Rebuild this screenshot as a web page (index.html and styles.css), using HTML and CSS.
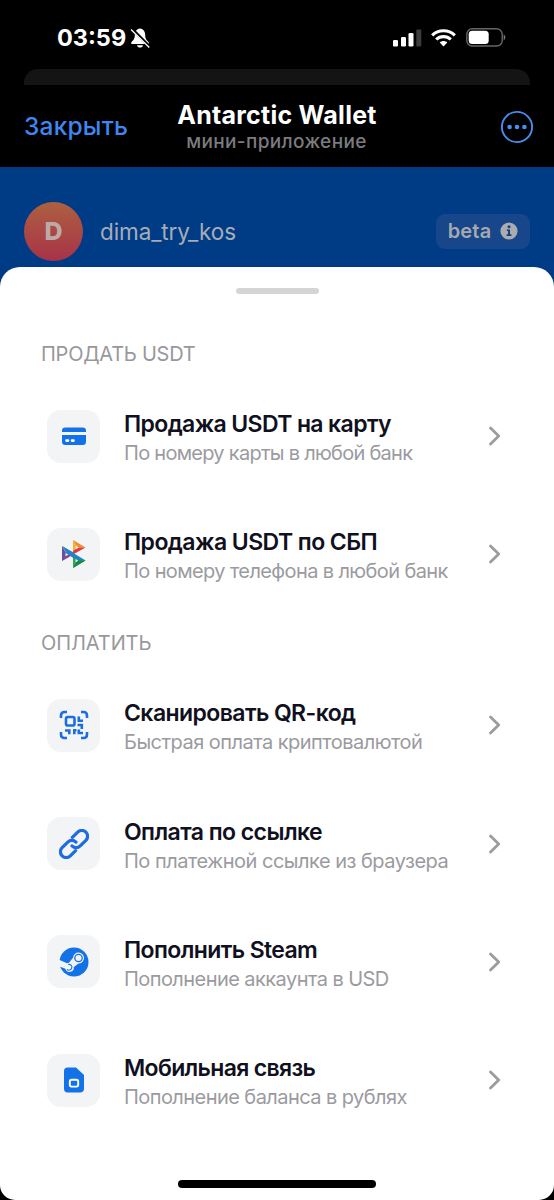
FILE: index.html
```html
<!DOCTYPE html>
<html lang="ru">
<head>
<meta charset="utf-8">
<title>Antarctic Wallet</title>
<link rel="stylesheet" href="styles.css">
</head>
<body>
<div class="phone">
  <div class="status">
    <div class="clock"><span class="time">03:59</span>
      <svg class="bell" width="20" height="21" viewBox="0 0 20 21"><path d="M10 0.5C6.3 1 4.8 3.8 4.8 7.2C4.8 11 3.2 12.2 1.3 14.2V16H18.7V14.2C16.8 12.2 15.2 11 15.2 7.2C15.2 3.8 13.7 1 10 .5ZM7 17.2H13C12.6 20.3 7.4 20.3 7 17.2Z" fill="#fff"/><path d="M2 1L20 19" stroke="#000" stroke-width="3"/><path d="M1 1.5L19.3 19.5" stroke="#fff" stroke-width="1.3"/></svg>
    </div>
    <div class="indicators">
      <svg width="29" height="18" viewBox="0 0 29 18"><g fill="#fff"><rect x="0" y="11" width="5" height="6.5" rx="1.3"/><rect x="8" y="8" width="5" height="9.5" rx="1.3"/><rect x="15.5" y="4" width="5" height="13.5" rx="1.3"/></g><rect x="23.3" y="0.5" width="5" height="17" rx="1.3" fill="#3d3d3d"/></svg>
      <svg class="wifi" width="25" height="18" viewBox="0 0 25 18"><g fill="none" stroke="#fff" stroke-width="3.1"><path d="M1.2 6.4C7.4 .2 17.6 .2 23.8 6.4"/><path d="M5.2 10.5C9.2 6.6 15.8 6.6 19.8 10.5"/></g><path d="M8.7 13.4C10.8 11.4 14.2 11.4 16.3 13.4L12.5 17.4Z" fill="#fff"/></svg>
      <svg class="battery" width="40" height="19" viewBox="0 0 40 19"><rect x=".8" y=".8" width="35.4" height="17.2" rx="5.5" fill="none" stroke="#666" stroke-width="1.4"/><rect x="2.7" y="2.8" width="20" height="13.2" rx="3.5" fill="#fff"/><path d="M37.7 6.2Q41 9.4 37.7 12.6Z" fill="#777"/></svg>
    </div>
  </div>
  <div class="strip"></div>
  <header class="header">
    <span class="close">Закрыть</span>
    <div class="heading"><span class="name">Antarctic Wallet</span><span class="kind">мини-приложение</span></div>
    <svg class="more" width="34" height="34" viewBox="0 0 34 34"><circle cx="17" cy="17" r="15.1" fill="none" stroke="#4a8df0" stroke-width="1.9"/><g fill="#4a8df0"><circle cx="9.6" cy="17" r="2.3"/><circle cx="17" cy="17" r="2.3"/><circle cx="24.4" cy="17" r="2.3"/></g></svg>
  </header>
  <div class="profile">
    <div class="avatar">D</div>
    <span class="user">dima_try_kos</span>
    <div class="beta"><span>beta</span><svg width="18" height="18" viewBox="0 0 18 18"><circle cx="9" cy="9" r="8.6" fill="#aaacaf"/><circle cx="9" cy="4.8" r="1.5" fill="#173f7f"/><path d="M6.8 7.5H10V12.3H11.4V13.9H6.6V12.3H8V9H6.8Z" fill="#173f7f"/></svg></div>
  </div>
  <div class="backdrop">
  <main class="sheet">
    <div class="grip"></div>
    <section class="group">
      <h2 class="label l-sell">ПРОДАТЬ USDT</h2>
      <div class="row">
        <div class="tile"><svg width="26" height="26" viewBox="0 0 26 26"><path d="M1 9V7.8Q1 4.5 4.3 4.5H21.7Q25 4.5 25 7.8V9Z" fill="#1472e8"/><path d="M1 12H25V18.7Q25 22 21.7 22H4.3Q1 22 1 18.7Z" fill="#1472e8"/><path d="M5.5 17.6H7M11 17.6H12.5" stroke="#fff" stroke-width="2.6" stroke-linecap="round"/></svg></div>
        <div class="copy"><span class="title t1">Продажа USDT на карту</span><span class="sub s1">По номеру карты в любой банк</span></div>
        <svg class="chevron" width="14" height="20" viewBox="0 0 14 20"><path d="M2.5 2L10.7 10L2.5 18"/></svg>
      </div>
      <div class="row">
        <div class="tile"><svg width="26" height="30" viewBox="0 0 26 30"><path d="M1 7L6.5 16.5V17L1 22Z" fill="#65509b"/><path d="M1 7L12 13.2V18.5Z" fill="#4376bc"/><path d="M1 22L7 18.8L12 15.5L6 12Z" fill="#824d9b"/><path d="M12 1L16.5 8.3V11L12 13.5Z" fill="#f3b52d"/><path d="M12 1L24.5 8.5L16.5 8.5Z" fill="#f28b29"/><path d="M24.5 8.5L12 15.6V12L17 8.5Z" fill="#df3846"/><path d="M12 16L24.5 21.5L12 29Z" fill="#36a650"/><path d="M1 7L24.5 21.5H16.5L6 15Z" fill="#2084c5"/><path d="M24.5 21.5L12 29L16.3 21.5Z" fill="#188745"/><path d="M4.5 14L7.3 15.6L4.5 17.3ZM14.8 6.7L17.8 8.5L14.8 10.2ZM14.6 20L17.2 21.7L14.6 23.3Z" fill="#f4f4f6"/></svg></div>
        <div class="copy"><span class="title t2">Продажа USDT по СБП</span><span class="sub s2">По номеру телефона в любой банк</span></div>
        <svg class="chevron" width="14" height="20" viewBox="0 0 14 20"><path d="M2.5 2L10.7 10L2.5 18"/></svg>
      </div>
    </section>
    <section class="group second">
      <h2 class="label l-pay">ОПЛАТИТЬ</h2>
      <div class="row">
        <div class="tile"><svg width="30" height="30" viewBox="0 0 30 30" fill="none" stroke="#1d6de0" stroke-width="2.6"><path d="M2 8V5.5Q2 2 5.5 2H8M22 2H24.5Q28 2 28 5.5V8M28 22V24.5Q28 28 24.5 28H22M8 28H5.5Q2 28 2 24.5V22"/><rect x="7" y="7" width="8.5" height="8.5" rx="1.8"/><path d="M19.8 6.5V10.8H24M18.5 15H22.8V19M6 20.5H10.3V24.2M15.3 24.2V20.2H17.5M19.8 19.5V23H24"/></svg></div>
        <div class="copy"><span class="title t3">Сканировать QR-код</span><span class="sub s3">Быстрая оплата криптовалютой</span></div>
        <svg class="chevron" width="14" height="20" viewBox="0 0 14 20"><path d="M2.5 2L10.7 10L2.5 18"/></svg>
      </div>
      <div class="row">
        <div class="tile"><svg width="30" height="30" viewBox="0 0 30 30"><g transform="rotate(-45 15 15)" fill="none" stroke="#1d6de0" stroke-width="3.2" stroke-linecap="round"><path d="M11.5 20.8H4A5.8 5.8 0 0 1 4 9.2H12A5.8 5.8 0 0 1 17.8 15"/><path d="M18.5 9.2H26A5.8 5.8 0 0 1 26 20.8H18A5.8 5.8 0 0 1 12.2 15"/></g></svg></div>
        <div class="copy"><span class="title t4">Оплата по ссылке</span><span class="sub s4">По платежной ссылке из браузера</span></div>
        <svg class="chevron" width="14" height="20" viewBox="0 0 14 20"><path d="M2.5 2L10.7 10L2.5 18"/></svg>
      </div>
      <div class="row">
        <div class="tile"><svg width="30" height="30" viewBox="0 0 30 30"><circle cx="15" cy="15" r="14.5" fill="#1472e8"/><path d="M0 12.8L8 16.2L10 15.8L14 10.8A5.5 5.5 0 1 1 19.5 16.6L14.8 20.1A4.3 4.3 0 0 1 6.4 21.8L0 19.2Z" fill="#f4f4f6"/><circle cx="19.5" cy="11" r="3.7" fill="none" stroke="#1472e8" stroke-width="1.3"/><path d="M9.2 17.5A2.9 2.9 0 1 1 8 22.4" fill="none" stroke="#1472e8" stroke-width="1.1"/></svg></div>
        <div class="copy"><span class="title t5">Пополнить Steam</span><span class="sub s5">Пополнение аккаунта в USD</span></div>
        <svg class="chevron" width="14" height="20" viewBox="0 0 14 20"><path d="M2.5 2L10.7 10L2.5 18"/></svg>
      </div>
      <div class="row">
        <div class="tile"><svg width="22" height="26" viewBox="0 0 22 26"><path d="M4.5 .5H13L21 8V21.5Q21 25.5 17 25.5H4.5Q1 25.5 1 21.5V4Q1 .5 4.5 .5Z" fill="#1472e8"/><rect x="6.8" y="12.8" width="8.4" height="6.8" rx="1.8" fill="none" stroke="#fff" stroke-width="1.9"/></svg></div>
        <div class="copy"><span class="title t6">Мобильная связь</span><span class="sub s6">Пополнение баланса в рублях</span></div>
        <svg class="chevron" width="14" height="20" viewBox="0 0 14 20"><path d="M2.5 2L10.7 10L2.5 18"/></svg>
      </div>
    </section>
    <div class="home"></div>
  </main>
  </div>
</div>
</body>
</html>
```

FILE: styles.css
```css
* { box-sizing: border-box; }
body { margin: 0; background: #000; font-family: Inter, "Liberation Sans", sans-serif; }
.phone { width: 554px; height: 1200px; overflow: hidden; display: flex; flex-direction: column; background: #003b85; white-space: nowrap; }
.status { height: 69px; flex: none; background: #000; color: #fff; display: flex; justify-content: space-between; padding: 28px 48px 0 57px; }
.clock { display: flex; gap: 4px; height: 20px; align-items: center; }
.time { font-size: 23.5px; font-weight: 700; line-height: 20px; }
.indicators { display: flex; height: 19px; align-items: center; }
.wifi { margin-left: 9px; }
.battery { margin-left: 10px; }
.strip { height: 16px; flex: none; background: #000; padding: 0 24px; }
.strip::before { content: ""; display: block; height: 16px; background: #141414; border-radius: 14px 14px 0 0; }
.header { height: 82px; flex: none; background: #000; display: grid; grid-template-columns: 150px 1fr 150px; align-items: center; padding: 1px 20px 0 24px; }
.close { color: #3f86f0; font-size: 24.5px; font-weight: 500; letter-spacing: .2px; line-height: 28px; padding-bottom: 2px; }
.heading { display: flex; flex-direction: column; align-items: center; padding-top: 1px; }
.name { color: #fff; font-size: 25px; font-weight: 700; line-height: 29px; letter-spacing: .25px; margin-left: -4px; }
.kind { color: #7b7b7f; font-size: 19px; font-weight: 500; line-height: 24px; letter-spacing: .35px; margin-left: -5px; }
.more { justify-self: end; }
.profile { height: 100px; flex: none; display: flex; align-items: center; padding: 28px 24px 0; color: #a6adb7; }
.avatar { width: 59px; height: 59px; border-radius: 50%; display: flex; align-items: center; justify-content: center; background: linear-gradient(#ad6040, #a83248); color: #bdaaa8; font-size: 25px; font-weight: 800; }
.user { margin-left: 17px; font-size: 22.5px; letter-spacing: -.1px; }
.beta { margin-left: auto; width: 94px; height: 35px; border-radius: 9px; background: #17468a; display: flex; align-items: center; justify-content: center; gap: 9px; font-size: 20px; font-weight: 600; letter-spacing: .2px; color: #a6a9af; }
.backdrop { flex: 1; display: flex; background: linear-gradient(#003b85 50%, #000 50%); }
.sheet { flex: 1; background: #fff; border-radius: 20px 20px 15px 15px; display: flex; flex-direction: column; }
.grip { width: 83px; height: 6px; border-radius: 3px; background: #d5d5d7; margin: 21px auto 36px; flex: none; }
.group { flex: none; }
.second { padding-top: 6px; }
.label { margin: 0; height: 47px; padding-left: 41px; font-size: 20px; line-height: 49px; font-weight: 400; color: #98989c; }
.l-sell { letter-spacing: -.25px; }
.l-pay { letter-spacing: -.1px; }
.row { height: 118.2px; display: flex; align-items: center; padding: 0 52px 0 47px; }
.tile { width: 53px; height: 53px; border-radius: 14px; background: #f3f4f6; display: flex; align-items: center; justify-content: center; flex: none; }
.copy { margin-left: 24px; padding-top: 5px; flex: 1; display: flex; flex-direction: column; }
.title { font-size: 23px; line-height: 30px; font-weight: 600; color: #101020; }
.sub { font-size: 20px; line-height: 29px; color: #9b9b9f; }
.t1 { letter-spacing: -.62px; }
.t2 { letter-spacing: -.55px; }
.t3 { letter-spacing: -.58px; }
.t4 { letter-spacing: -.56px; }
.t5 { letter-spacing: -.6px; }
.t6 { letter-spacing: -.66px; }
.s1 { letter-spacing: -.73px; }
.s2 { letter-spacing: -.61px; }
.s3 { letter-spacing: -.53px; }
.s4 { letter-spacing: -.51px; }
.s5 { letter-spacing: -.56px; }
.s6 { letter-spacing: -.56px; }
.chevron { fill: none; stroke: #9c9ca0; stroke-width: 2.8; stroke-linecap: round; stroke-linejoin: round; }
.home { width: 198px; height: 8px; border-radius: 4px; background: #000; margin: auto auto 12px; flex: none; }
```
